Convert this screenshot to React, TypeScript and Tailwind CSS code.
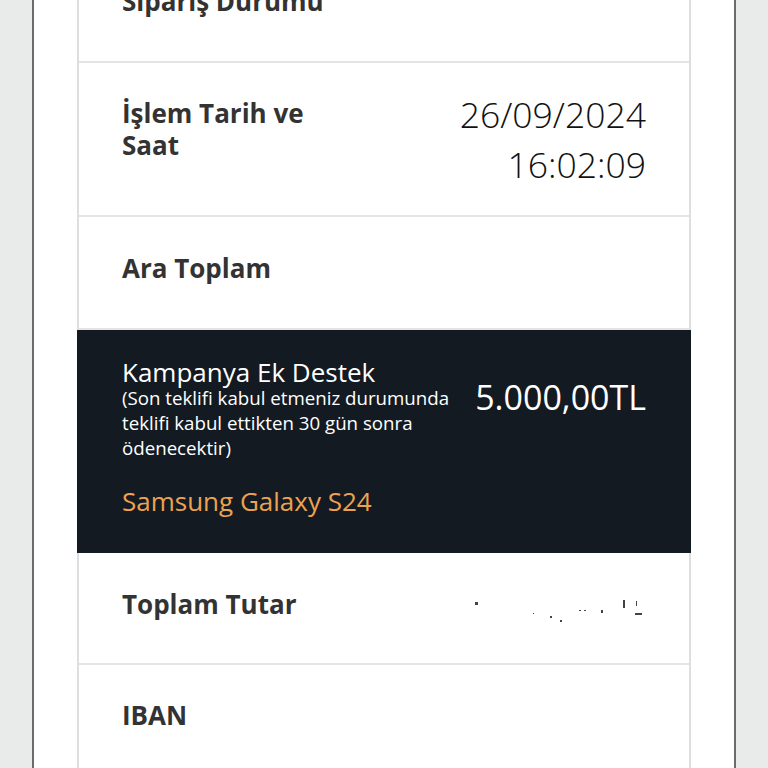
import React from "react";

const font = { fontFamily: '"Open Sans", "Noto Sans", sans-serif' };

function Row({ label, children, className = "" }: { label: React.ReactNode; children?: React.ReactNode; className?: string }) {
  return (
    <div className={`flex items-start justify-between border-b-2 border-[#e4e4e4] px-[43px] ${className}`}>
      <div className="w-[215px] text-[26px] font-bold leading-[32px] text-[#333]">{label}</div>
      {children}
    </div>
  );
}

function Redacted() {
  // faint specks left over from a blurred amount
  const specks = [
    [5, 14, 3, 3], [63, 25, 1, 1], [80, 28, 2, 2], [90, 32, 2, 2],
    [109, 22, 2, 1], [114, 22, 2, 1], [131, 22, 2, 3], [153, 12, 2, 8],
    [166, 13, 1, 5], [165, 25, 7, 2],
  ];
  return (
    <svg width="176" height="36" viewBox="0 0 176 36">
      {specks.map(([x, y, w, h], i) => (
        <rect key={i} x={x} y={y} width={w} height={h} fill="#444" />
      ))}
    </svg>
  );
}

export default function App() {
  return (
    <div className="flex h-[768px] w-[768px] overflow-hidden bg-[#e9eaea]" style={font}>
      <div className="w-[32px] shrink-0" />
      <div className="w-[2px] shrink-0 bg-[#6b6b6b]" />
      <div className="w-[700px] shrink-0 bg-white px-[43px]">
        <div className="-mt-[50px] h-[900px] border-x-2 border-[#dedede]">
          <Row label="Sipariş Durumu" className="pt-[35px] pb-[44px]" />

          <Row label="İşlem Tarih ve Saat" className="py-[26px] [&>div:first-child]:mt-[8px]">
            <div className="text-right text-[35.5px] font-light leading-[50px] text-[#111]">
              <div>26/09/2024</div>
              <div>16:02:09</div>
            </div>
          </Row>

          <Row label="Ara Toplam" className="pt-[35px] pb-[44px]" />

          <div className="-mx-[2px] flex items-start gap-[16px] bg-[#131a22] pl-[45px] pr-[45px] pt-[29px] pb-[36px]">
            <div className="min-w-0 flex-1">
              <div className="text-[26px] leading-[26px] text-white">Kampanya Ek Destek</div>
              <div className="whitespace-nowrap text-[18.7px] leading-[25px] text-white">
                (Son teklifi kabul etmeniz durumunda
                <br />
                teklifi kabul ettikten 30 gün sonra
                <br />
                ödenecektir)
              </div>
              <div className="mt-[25px] text-[26px] leading-[32px] text-[#eda24f]">Samsung Galaxy S24</div>
            </div>
            <div className="mt-[18px] shrink-0 text-[34px] leading-[40px] text-white">5.000,00TL</div>
          </div>

          <Row label="Toplam Tutar" className="pt-[35px] pb-[39px]">
            <Redacted />
          </Row>

          <Row label="IBAN" className="pt-[34px] pb-[44px]" />
        </div>
      </div>
      <div className="w-[2px] shrink-0 bg-[#6b6b6b]" />
      <div className="flex-1" />
    </div>
  );
}
